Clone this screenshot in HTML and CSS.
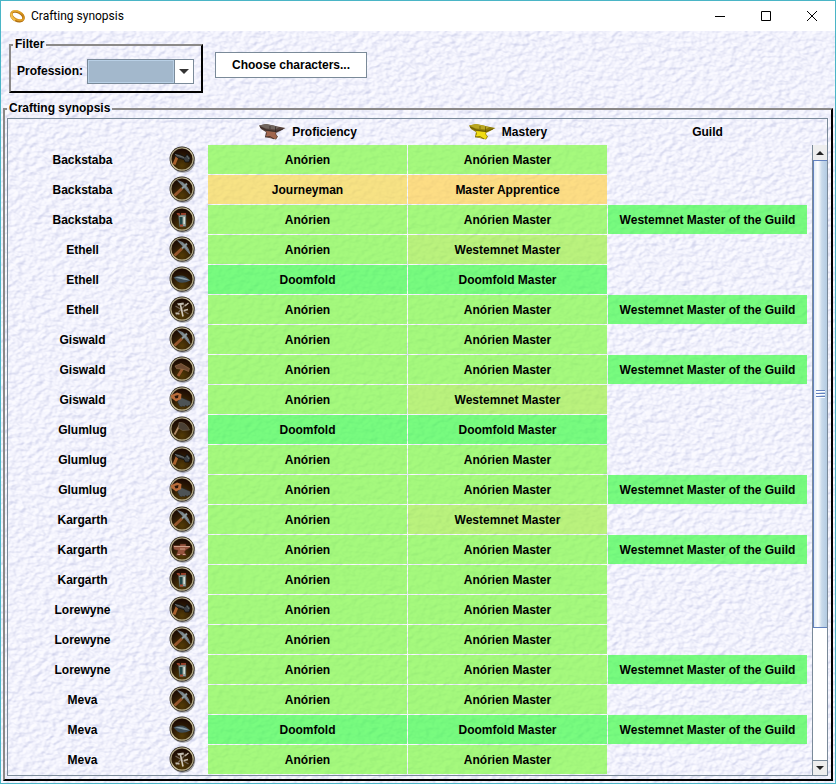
FILE: index.html
```html
<!DOCTYPE html>
<html lang="en">
<head>
<meta charset="utf-8">
<title>Crafting synopsis</title>
<link rel="stylesheet" href="styles.css">
</head>
<body>
<svg class="defs" aria-hidden="true">
  <defs>
    <filter id="paper" x="0" y="0" width="100%" height="100%" color-interpolation-filters="sRGB">
      <feTurbulence type="fractalNoise" baseFrequency="0.15 0.21" numOctaves="2" seed="7"/>
      <feColorMatrix type="matrix" values="0 0 0 0 0  0 0 0 0 0  0 0 0 0 0  1 0 0 0 0"/>
      <feDiffuseLighting surfaceScale="2" diffuseConstant="1" lighting-color="#fff">
        <feDistantLight azimuth="220" elevation="60"/>
      </feDiffuseLighting>
      <feComponentTransfer>
        <feFuncR type="linear" slope="0.28" intercept="0.71"/>
        <feFuncG type="linear" slope="0.26" intercept="0.728"/>
        <feFuncB type="linear" slope="0.14" intercept="0.871"/>
      </feComponentTransfer>
    </filter>
    <radialGradient id="disc" cx="50%" cy="80%" r="80%">
      <stop offset="0" stop-color="#543c06"/><stop offset="0.55" stop-color="#2c1a04"/><stop offset="1" stop-color="#170503"/>
    </radialGradient>
    <linearGradient id="rim" x1="0" y1="0" x2="1" y2="1">
      <stop offset="0" stop-color="#8d8468"/><stop offset="0.5" stop-color="#cfc69e"/><stop offset="1" stop-color="#9a9072"/>
    </linearGradient>
    <linearGradient id="gold" x1="0" y1="0" x2="1" y2="1">
      <stop offset="0" stop-color="#f5c040"/><stop offset="0.5" stop-color="#c98414"/><stop offset="1" stop-color="#e9a92c"/>
    </linearGradient>
    <symbol id="badge" viewBox="0 0 28 28">
      <circle cx="15" cy="15.5" r="12.2" fill="#444" opacity="0.5"/>
      <circle cx="14" cy="14" r="12.4" fill="#15110a"/>
      <circle cx="14" cy="14" r="11.2" fill="url(#disc)" stroke="url(#rim)" stroke-width="1.3"/>
    </symbol>
    <symbol id="axe" viewBox="1 1 28 28">
      <use href="#badge" width="28" height="28"/>
      <path d="M6 19.500 9.500 11" stroke="#a8622e" stroke-width="3"/>
      <path d="M6 8.500 12 9.500 17 12 19 9 22.500 13 21 17 17 17 16 14.500 9 12.500Z" fill="#3b4042" stroke="#0a0a0a" stroke-width="0.7"/>
      <path d="M7 9.500 16 12.500M19 11l2 3" stroke="#777a76" stroke-width="0.8"/>
    </symbol>
    <symbol id="pick" viewBox="1 1 28 28">
      <use href="#badge" width="28" height="28"/>
      <path d="M6.500 20.500 14 13.500" stroke="#96572d" stroke-width="3"/>
      <path d="M10.500 6Q19 8 22 19Q17.500 13.500 10.500 6Z" fill="#8d979c" stroke="#707c82" stroke-width="1.100"/>
      <path d="m14 13.500 5-5" stroke="#8e9a9e" stroke-width="2"/>
    </symbol>
    <symbol id="jar" viewBox="1 1 28 28">
      <use href="#badge" width="28" height="28"/>
      <path d="M10.500 10h7.500v11.500h-6.500z" fill="#93a19a" stroke="#3a4845" stroke-width="0.6"/>
      <path d="M11.500 12h3v8.500h-2.500z" fill="#1f4646"/><path d="M15.500 12h1.500v7h-1.500z" fill="#d5ddd2"/>
      <path d="M8.500 8h3l1 3-3-1zM13 8h5v2h-5z" fill="#94402b"/><path d="M12 19.500h3v2h-3z" fill="#b04a35"/>
    </symbol>
    <symbol id="quill" viewBox="1 1 28 28">
      <use href="#badge" width="28" height="28"/>
      <path d="M5.500 12.500Q12 9 18 12L22.500 15.500Q14 19.500 9.500 16.500Z" fill="#3e4d57"/>
      <path d="M6.500 12.500Q13 11 18 13.500L22 15.500Q16 15 11 13.500Z" fill="#8ba0ab"/>
    </symbol>
    <symbol id="tools" viewBox="1 1 28 28">
      <use href="#badge" width="28" height="28"/>
      <path d="m8 20 10-11M7.500 11l13 8" stroke="#75675a" stroke-width="1.300"/>
      <path d="m12.500 10 2.500 11.500" stroke="#d3cbbd" stroke-width="1.600"/>
      <path d="M9 8.500 15.500 7.500 16 9.500 10.500 10.500Z" fill="#c0bbb0"/>
      <path d="M17 11 20.500 8M7.500 18l4 1M16 15.500l4-1" stroke="#c2b8a8" stroke-width="1.300"/>
    </symbol>
    <symbol id="hammer" viewBox="1 1 28 28">
      <use href="#badge" width="28" height="28"/>
      <path d="m10 21 5-8" stroke="#9a5a31" stroke-width="2.800"/>
      <path d="M7 11 13 8.500 21.500 13.500 20.500 16.500 16 14.500 8.500 13.500Z" fill="#6d4a32" stroke="#9c7553" stroke-width="0.600"/>
    </symbol>
    <symbol id="saw" viewBox="1 1 28 28">
      <use href="#badge" width="28" height="28"/>
      <path d="m12 12 10.500 4.500v3.500l-2 .5-1 1-2-1-1 1.500-2-1-1 1-2-1-2-4Z" fill="#4d5355" stroke="#222" stroke-width="0.500"/>
      <path d="M2.500 10.500 9 7.500 13.500 9 13 14 8 16.500 3.500 13Z" fill="#b86c3b"/>
      <path d="M6.500 11 10.500 10 10 13 7.500 13.500Z" fill="#251308"/>
    </symbol>
    <symbol id="hoe" viewBox="1 1 28 28">
      <use href="#badge" width="28" height="28"/>
      <path d="m6.500 19.500 5.500-10" stroke="#b08a67" stroke-width="1.800"/>
      <path d="M11 7.500Q18 6.500 21.500 15L14.500 15.500 10.500 13Z" fill="#4a4034" stroke="#75644f" stroke-width="0.600"/>
    </symbol>
    <symbol id="anvil" viewBox="1 1 28 28">
      <use href="#badge" width="28" height="28"/>
      <path d="M5 10.500h7V9h6v2l5 1-5 3-1.500 2 2 3.500h-4l-1-1-2 1H8l2-5-4-1Z" fill="#95543e" stroke="#4a241a" stroke-width="0.500"/>
      <path d="M6 11.500h16M12 14h5M9.500 19.500h2.500m3 0h2.500" stroke="#cda18b"/>
    </symbol>
    <symbol id="block" viewBox="0 0 28 17">
      <path class="block-side" d="M1 2.500 8 1 17 3 27.500 5 23 7.500 18 10 18.500 12 20 13.500 18 16.500 7 14 8 9 3 6Z"/>
      <path class="block-top" d="M1 2.500 8 1 16 2.500 21 4.500 17 6.500 8 5.500Z"/>
      <path class="block-face" d="M8 8 17.500 9 17.500 11.500 19 13.500 17.500 16 7.500 13.500 9 11Z"/>
      <path class="block-line" d="M2 4 8 7 18 8.500 25 6M7 14 12 13.500 16 16M17.500 9V3.500M12 3v3"/>
    </symbol>
  </defs>
</svg>

<div class="window">
  <header class="titlebar">
    <svg class="app-icon" viewBox="0 0 18 16" aria-hidden="true">
      <g transform="rotate(28 9 8)" fill="none"><ellipse cx="9" cy="8.500" rx="7" ry="4.500" stroke="#b06f10" stroke-width="2.600"/><ellipse cx="9" cy="7.500" rx="7" ry="4.200" stroke="url(#gold)" stroke-width="2"/><path d="M2 8.500Q3.500 13 9 13" stroke="#f3c04c" stroke-width="2.400"/></g>
    </svg>
    <h1>Crafting synopsis</h1>
    <button class="win-btn" aria-label="Minimize"><svg viewBox="0 0 10 10"><path d="M0 5.500h10"/></svg></button>
    <button class="win-btn" aria-label="Maximize"><svg viewBox="0 0 10 10"><path d="M.5.5h9v9h-9z"/></svg></button>
    <button class="win-btn" aria-label="Close"><svg viewBox="0 0 10 10"><path d="m0 0 10 10M10 0 0 10"/></svg></button>
  </header>

  <main class="content">
    <svg class="paper" aria-hidden="true"><rect width="100%" height="100%" filter="url(#paper)"/></svg>

    <div class="toolbar">
      <fieldset class="group filter">
        <legend>Filter</legend>
        <label for="profession">Profession:</label>
        <span class="combo">
          <select id="profession"><option></option></select>
          <svg viewBox="0 0 10 5" aria-hidden="true"><path d="M0 0h10L5 5z"/></svg>
        </span>
      </fieldset>
      <button class="choose">Choose characters...</button>
    </div>

    <fieldset class="group synopsis">
      <legend>Crafting synopsis</legend>
      <div class="scrollpane">
        <table>
          <colgroup><col class="c-name"><col class="c-icon"><col class="c-tier"><col class="c-tier"><col class="c-tier"></colgroup>
          <thead>
            <tr><th></th><th></th>
              <th><span class="head"><svg class="block bronze" aria-hidden="true"><use href="#block"/></svg>Proficiency</span></th>
              <th><span class="head"><svg class="block golden" aria-hidden="true"><use href="#block"/></svg>Mastery</span></th>
              <th>Guild</th></tr>
          </thead>
          <tbody>
            <tr><td>Backstaba</td><td><svg class="tool"><use href="#axe"/></svg></td><td class="t7">Anórien</td><td class="t7">Anórien Master</td><td></td></tr>
            <tr><td>Backstaba</td><td><svg class="tool"><use href="#pick"/></svg></td><td class="t2">Journeyman</td><td class="t1">Master Apprentice</td><td></td></tr>
            <tr><td>Backstaba</td><td><svg class="tool"><use href="#jar"/></svg></td><td class="t7">Anórien</td><td class="t7">Anórien Master</td><td class="t8">Westemnet Master of the Guild</td></tr>
            <tr><td>Ethell</td><td><svg class="tool"><use href="#pick"/></svg></td><td class="t7">Anórien</td><td class="t6">Westemnet Master</td><td></td></tr>
            <tr><td>Ethell</td><td><svg class="tool"><use href="#quill"/></svg></td><td class="t8">Doomfold</td><td class="t8">Doomfold Master</td><td></td></tr>
            <tr><td>Ethell</td><td><svg class="tool"><use href="#tools"/></svg></td><td class="t7">Anórien</td><td class="t7">Anórien Master</td><td class="t8">Westemnet Master of the Guild</td></tr>
            <tr><td>Giswald</td><td><svg class="tool"><use href="#pick"/></svg></td><td class="t7">Anórien</td><td class="t7">Anórien Master</td><td></td></tr>
            <tr><td>Giswald</td><td><svg class="tool"><use href="#hammer"/></svg></td><td class="t7">Anórien</td><td class="t7">Anórien Master</td><td class="t8">Westemnet Master of the Guild</td></tr>
            <tr><td>Giswald</td><td><svg class="tool"><use href="#saw"/></svg></td><td class="t7">Anórien</td><td class="t6">Westemnet Master</td><td></td></tr>
            <tr><td>Glumlug</td><td><svg class="tool"><use href="#hoe"/></svg></td><td class="t8">Doomfold</td><td class="t8">Doomfold Master</td><td></td></tr>
            <tr><td>Glumlug</td><td><svg class="tool"><use href="#axe"/></svg></td><td class="t7">Anórien</td><td class="t7">Anórien Master</td><td></td></tr>
            <tr><td>Glumlug</td><td><svg class="tool"><use href="#saw"/></svg></td><td class="t7">Anórien</td><td class="t7">Anórien Master</td><td class="t8">Westemnet Master of the Guild</td></tr>
            <tr><td>Kargarth</td><td><svg class="tool"><use href="#pick"/></svg></td><td class="t7">Anórien</td><td class="t6">Westemnet Master</td><td></td></tr>
            <tr><td>Kargarth</td><td><svg class="tool"><use href="#anvil"/></svg></td><td class="t7">Anórien</td><td class="t7">Anórien Master</td><td class="t8">Westemnet Master of the Guild</td></tr>
            <tr><td>Kargarth</td><td><svg class="tool"><use href="#jar"/></svg></td><td class="t7">Anórien</td><td class="t7">Anórien Master</td><td></td></tr>
            <tr><td>Lorewyne</td><td><svg class="tool"><use href="#axe"/></svg></td><td class="t7">Anórien</td><td class="t7">Anórien Master</td><td></td></tr>
            <tr><td>Lorewyne</td><td><svg class="tool"><use href="#pick"/></svg></td><td class="t7">Anórien</td><td class="t7">Anórien Master</td><td></td></tr>
            <tr><td>Lorewyne</td><td><svg class="tool"><use href="#jar"/></svg></td><td class="t7">Anórien</td><td class="t7">Anórien Master</td><td class="t8">Westemnet Master of the Guild</td></tr>
            <tr><td>Meva</td><td><svg class="tool"><use href="#pick"/></svg></td><td class="t7">Anórien</td><td class="t7">Anórien Master</td><td></td></tr>
            <tr><td>Meva</td><td><svg class="tool"><use href="#quill"/></svg></td><td class="t8">Doomfold</td><td class="t8">Doomfold Master</td><td class="t8">Westemnet Master of the Guild</td></tr>
            <tr><td>Meva</td><td><svg class="tool"><use href="#tools"/></svg></td><td class="t7">Anórien</td><td class="t7">Anórien Master</td><td></td></tr>
          </tbody>
        </table>
        <div class="scrollbar">
          <button aria-label="Scroll up"><svg viewBox="0 0 8 4"><path d="M0 4h8L4 0z"/></svg></button>
          <div class="track"><div class="thumb"><span class="grip"></span></div></div>
          <button aria-label="Scroll down"><svg viewBox="0 0 8 4"><path d="M0 0h8L4 4z"/></svg></button>
        </div>
      </div>
    </fieldset>
  </main>
</div>
</body>
</html>
```
FILE: styles.css
```css
* { box-sizing: border-box; }

body {
  margin: 0;
  font: bold 12px/15px "Liberation Sans", Arial, sans-serif;
  color: #000;
}

button, select { font: inherit; color: inherit; padding: 0; border-radius: 0; }
.defs { position: absolute; width: 0; height: 0; }

.window {
  display: flex;
  flex-direction: column;
  min-height: 100vh;
  border: 1px solid #4ab5c6;
}

/* Title bar */
.titlebar {
  display: flex;
  align-items: center;
  height: 30px;
  padding-left: 8px;
  background: #fff;
}
.app-icon { width: 17px; height: 16px; }
.titlebar h1 {
  flex: 1;
  margin: 0 0 0 5px;
  font: 12px/16px Roboto, "Segoe UI", sans-serif;
}
.win-btn {
  display: flex;
  align-items: center;
  justify-content: center;
  width: 46px;
  height: 30px;
  border: 0;
  background: none;
}
.win-btn svg { width: 10px; height: 10px; fill: none; stroke: #000; overflow: visible; }

/* Textured body */
.content {
  position: relative;
  flex: 1;
  display: flex;
  flex-direction: column;
  padding: 6px 2px 2px;
  background: #f2f2fd;
}
.paper { position: absolute; inset: 0; width: 100%; height: 100%; }
.toolbar, .synopsis { position: relative; }

.group {
  min-width: 0;
  margin: 0;
  border: 2px solid;
  border-color: #8b8988 #000 #000 #8b8988;
}
.group legend { padding: 0 2px; }

.toolbar { display: flex; align-items: center; gap: 12px; padding: 0 6px; }
.filter { display: flex; align-items: center; padding: 7px 7px 7px 2px; }
.filter label { margin: 0 4px; line-height: 17px; }

.combo { position: relative; display: block; }
.combo select {
  display: block;
  appearance: none;
  width: 107px;
  height: 25px;
  border: 1px solid #7a8a99;
  background:
    linear-gradient(#7a8a99, #7a8a99) right 18px top / 1px 100% no-repeat,
    linear-gradient(#fff, #fff) right / 18px 100% no-repeat,
    #a3b8cc;
}
.combo::before {
  content: "";
  position: absolute;
  inset: 1px 20px 1px 1px;
  border: 1px solid #b8cfe5;
  pointer-events: none;
}
.combo svg {
  position: absolute;
  right: 5px;
  top: 10px;
  width: 10px;
  height: 5px;
  fill: #333;
  pointer-events: none;
}

.choose {
  width: 152px;
  height: 26px;
  border: 1px solid #7a8a99;
  background: #fff;
}

/* Synopsis table */
.synopsis { flex: 1; display: flex; margin-top: 8px; padding: 2px 3px 3px 2px; }
.scrollpane {
  flex: 1;
  display: flex;
  border: 1px solid #7a8a99;
}
table {
  flex: 1;
  margin-right: 4px;
  table-layout: fixed;
  border-collapse: separate;
  border-spacing: 0;
  text-align: center;
}
.c-name { width: 18.75%; }
.c-icon { width: 6.25%; }
.c-tier { width: 25%; }
th, td {
  height: 30px;
  padding: 1px 0 0;
  border: solid transparent;
  border-width: 0 1px 1px 0;
  background-clip: padding-box;
}
th { height: 26px; padding-top: 2px; }
.head { display: flex; align-items: center; justify-content: center; gap: 6px; }
.block { width: 28px; height: 17px; margin-top: -2px; }
.bronze { --side: #54403a; --top: #71665f; --face: #a1664e; --line: #2f2422; }
.golden { --side: #8e7b08; --top: #b9a622; --face: #f0dc12; --line: #5d5006; }
.block-side { fill: var(--side); }
.block-top { fill: var(--top); }
.block-face { fill: var(--face); }
.block-line { fill: none; stroke: var(--line); stroke-width: 0.7; }
.tool { display: block; width: 28px; height: 28px; margin: 0 auto; }

.t1 { background-color: rgba(255, 210, 80, 0.7); }
.t2 { background-color: rgba(246, 217, 80, 0.7); }
.t6 { background-color: rgba(160, 240, 70, 0.7); }
.t7 { background-color: rgba(130, 250, 70, 0.7); }
.t8 { background-color: rgba(66, 252, 72, 0.7); }

/* Scroll bar */
.scrollbar {
  display: flex;
  flex-direction: column;
  width: 15px;
  margin-top: 26px;
  border-left: 1px solid #7a8a99;
  background: #fff;
}
.scrollbar button {
  display: flex;
  align-items: center;
  justify-content: center;
  height: 15px;
  border: 0;
  background: #eee;
}
.scrollbar button:last-child { border-top: 1px solid #7a8a99; }
.scrollbar svg { width: 8px; height: 4px; fill: #222; }
.track { flex: 1; }
.thumb {
  display: flex;
  align-items: center;
  justify-content: center;
  height: 78%;
  border: solid #6382bf;
  border-width: 1px 0 1px 1px;
  background: linear-gradient(90deg, #dfeaf5, #fff 30%, #c8daeb 60%, #b2cae2);
}
.grip {
  width: 9px;
  height: 8px;
  background: repeating-linear-gradient(#6382bf 0 1px, #fff 1px 2px, transparent 2px 3px);
}
```
